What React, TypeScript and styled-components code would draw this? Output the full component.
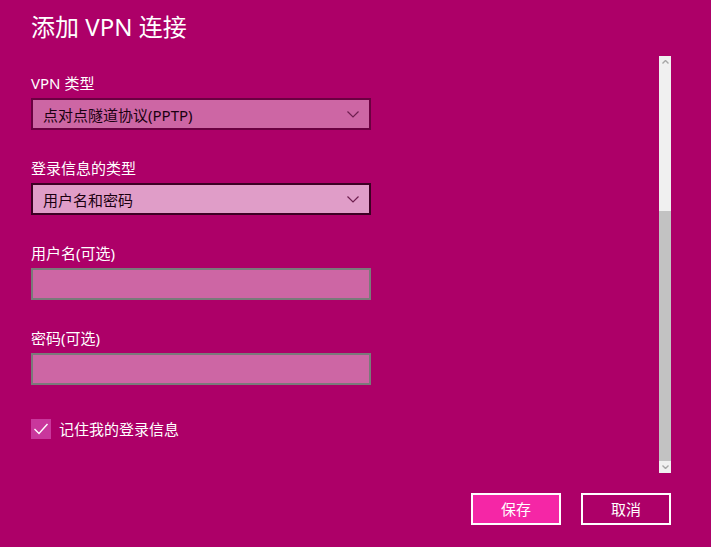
import styled, { createGlobalStyle } from "styled-components";

const GlobalStyle = createGlobalStyle`
  html, body {
    margin: 0;
    padding: 0;
    background: #ad0068;
  }
  body {
    font-family: "Noto Sans", "Noto Sans CJK SC", sans-serif;
    color: #ffffff;
  }
`;

const Window = styled.div`
  width: 711px;
  height: 547px;
  background: #ad0068;
  display: flex;
  flex-direction: column;
  overflow: hidden;
`;

const Title = styled.h1`
  margin: 0;
  padding: 11px 31px 13px;
  font-size: 24px;
  font-weight: 400;
  line-height: 32px;
  color: #ffffff;
`;

const Body = styled.div`
  display: flex;
  height: 417px;
  padding-right: 40px;
`;

const Form = styled.div`
  flex: 1;
  display: flex;
  flex-direction: column;
  padding: 17px 0 0 31px;
`;

const Field = styled.div`
  display: flex;
  flex-direction: column;
  gap: 5px;
  margin-bottom: 28px;
`;

const Label = styled.label`
  font-size: 15px;
  line-height: 20px;
  color: #ffffff;
`;

interface ComboProps {
  $active?: boolean;
}

const Combo = styled.div<ComboProps>`
  box-sizing: border-box;
  width: 340px;
  height: 32px;
  display: flex;
  align-items: center;
  justify-content: space-between;
  padding: 0 10px 0 10px;
  background: ${(p) => (p.$active ? "#e09dc8" : "#cd66a4")};
  border: 2px solid ${(p) => (p.$active ? "#3d0024" : "#6b0041")};
  font-size: 15px;
  color: #1a0010;
`;

const TextBox = styled.div`
  box-sizing: border-box;
  width: 340px;
  height: 32px;
  background: #cd66a4;
  border: 2px solid #7a7a7a;
`;

const CheckRow = styled.div`
  display: flex;
  align-items: center;
  gap: 8px;
  margin-top: 6px;
  font-size: 15px;
  line-height: 20px;
`;

const CheckBox = styled.div`
  width: 20px;
  height: 20px;
  background: #c9379c;
  display: flex;
  align-items: center;
  justify-content: center;
`;

const ScrollBar = styled.div`
  width: 12px;
  display: flex;
  flex-direction: column;
  background: #f0f0f0;
`;

const ScrollArrow = styled.div`
  height: 12px;
  display: flex;
  align-items: center;
  justify-content: center;
  background: #f0f0f0;
`;

const ScrollTrack = styled.div`
  flex: 1;
  display: flex;
  flex-direction: column;
  padding-top: 143px;
`;

const ScrollThumb = styled.div`
  flex: 1;
  background: #c2c2c2;
`;

const Footer = styled.div`
  display: flex;
  justify-content: flex-end;
  gap: 20px;
  padding: 20px 40px 0 0;
`;

interface ButtonProps {
  $primary?: boolean;
}

const Button = styled.button<ButtonProps>`
  box-sizing: border-box;
  width: 90px;
  height: 32px;
  border: 2px solid #ffffff;
  background: ${(p) => (p.$primary ? "#f526a6" : "transparent")};
  color: #ffffff;
  font-family: "Noto Sans", "Noto Sans CJK SC", sans-serif;
  font-size: 15px;
  line-height: 20px;
  padding: 0;
  cursor: pointer;
`;

const Chevron = ({ color }: { color: string }) => (
  <svg width="12" height="7" viewBox="0 0 12 7">
    <polyline points="0.5,0.5 6,6 11.5,0.5" fill="none" stroke={color} strokeWidth="1.2" />
  </svg>
);

const SmallArrow = ({ up }: { up?: boolean }) => (
  <svg width="7" height="4" viewBox="0 0 7 4">
    <polyline
      points={up ? "0.5,3.5 3.5,0.5 6.5,3.5" : "0.5,0.5 3.5,3.5 6.5,0.5"}
      fill="none"
      stroke="#a6a6a6"
      strokeWidth="1.4"
    />
  </svg>
);

export default function App() {
  return (
    <Window>
      <GlobalStyle />
      <Title>添加 VPN 连接</Title>
      <Body>
        <Form>
          <Field>
            <Label>VPN 类型</Label>
            <Combo>
              <span>点对点隧道协议(PPTP)</span>
              <Chevron color="#6e1f4f" />
            </Combo>
          </Field>
          <Field>
            <Label>登录信息的类型</Label>
            <Combo $active>
              <span>用户名和密码</span>
              <Chevron color="#6e1f4f" />
            </Combo>
          </Field>
          <Field>
            <Label>用户名(可选)</Label>
            <TextBox />
          </Field>
          <Field>
            <Label>密码(可选)</Label>
            <TextBox />
          </Field>
          <CheckRow>
            <CheckBox>
              <svg width="20" height="20" viewBox="0 0 20 20">
                <polyline points="3.5,10 8,14.5 16.5,5" fill="none" stroke="#ffffff" strokeWidth="1.4" />
              </svg>
            </CheckBox>
            <span>记住我的登录信息</span>
          </CheckRow>
        </Form>
        <ScrollBar>
          <ScrollArrow>
            <SmallArrow up />
          </ScrollArrow>
          <ScrollTrack>
            <ScrollThumb />
          </ScrollTrack>
          <ScrollArrow>
            <SmallArrow />
          </ScrollArrow>
        </ScrollBar>
      </Body>
      <Footer>
        <Button $primary>保存</Button>
        <Button>取消</Button>
      </Footer>
    </Window>
  );
}
